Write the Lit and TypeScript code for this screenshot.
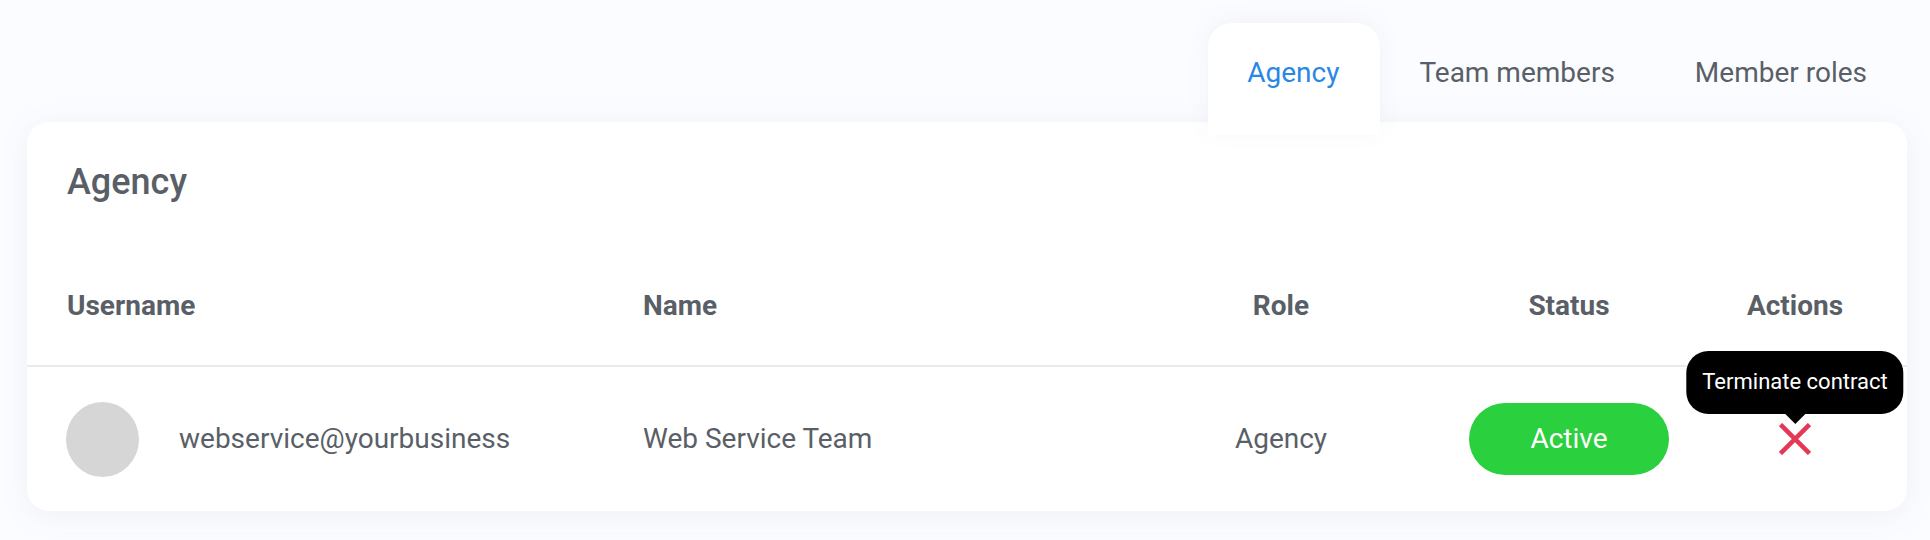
import { LitElement, html, css } from "lit";
import { customElement } from "lit/decorators.js";

@customElement("app-root")
export class AppRoot extends LitElement {
  static styles = css`
    :host {
      display: block;
      width: 100%;
      height: 540px;
      overflow: hidden;
      background: #fbfcff;
      font-family: Roboto, "Liberation Sans", sans-serif;
      color: #5a5f67;
    }
    .page {
      padding: 23px 23px 0 27px;
    }
    .tabs {
      display: flex;
      justify-content: flex-end;
      position: relative;
      z-index: 2;
      height: 99px;
    }
    .tab {
      box-sizing: border-box;
      height: 112px;
      padding: 31px 40px 0;
      font-size: 28px;
      line-height: 38px;
      border-radius: 24px 24px 0 0;
      white-space: nowrap;
    }
    .tab.active {
      background: #fff;
      color: #2a88e4;
      padding-left: 39px;
      padding-right: 41px;
      margin-right: -1px;
      box-shadow: 0 -4px 24px rgba(90, 100, 140, 0.06);
    }
    .card {
      box-sizing: border-box;
      height: 389px;
      background: #fff;
      border-radius: 22px;
      box-shadow: 0 4px 30px rgba(90, 100, 140, 0.08);
    }
    h2 {
      margin: 0;
      padding: 37px 40px 0;
      font-size: 36px;
      line-height: 46px;
      font-weight: 500;
    }
    .row {
      display: grid;
      grid-template-columns: 576px 484px 308px 268px 184px;
      padding: 0 24px 0 40px;
      align-items: center;
    }
    .head {
      margin-top: 48px;
      height: 105px;
      padding-bottom: 7px;
      border-bottom: 2px solid #ebebeb;
      font-size: 28px;
      font-weight: 700;
      box-sizing: content-box;
    }
    .body {
      height: 142px;
      padding-top: 1px;
      font-size: 28px;
    }
    .text {
      padding-bottom: 2px;
    }
    .center {
      text-align: center;
      display: flex;
      justify-content: center;
      align-items: center;
    }
    .user {
      display: flex;
      align-items: center;
      gap: 40px;
    }
    .avatar {
      width: 73px;
      height: 75px;
      border-radius: 50%;
      background: #d6d6d6;
      margin-left: -1px;
    }
    .pill {
      box-sizing: border-box;
      width: 200px;
      height: 72px;
      padding-bottom: 2px;
      border-radius: 36px;
      background: #2ad03d;
      color: #fff;
      display: flex;
      align-items: center;
      justify-content: center;
    }
    .action {
      position: relative;
      height: 32px;
      width: 32px;
    }
    .action svg {
      display: block;
    }
    .tip {
      position: absolute;
      left: 50%;
      bottom: 41px;
      transform: translateX(-50%);
      height: 63px;
      box-sizing: border-box;
      padding: 0 16px 2px;
      display: flex;
      align-items: center;
      background: #000;
      color: #fff;
      border-radius: 22px;
      font-size: 22px;
      white-space: nowrap;
    }
    .tip::after {
      content: "";
      position: absolute;
      left: 50%;
      top: 100%;
      margin-left: -10px;
      border: 10px solid transparent;
      border-top-color: #000;
      border-bottom: 0;
    }
  `;

  render() {
    return html`
      <div class="page">
        <div class="tabs">
          <div class="tab active">Agency</div>
          <div class="tab">Team members</div>
          <div class="tab">Member roles</div>
        </div>
        <div class="card">
          <h2>Agency</h2>
          <div class="row head">
            <div>Username</div>
            <div>Name</div>
            <div class="center">Role</div>
            <div class="center">Status</div>
            <div class="center">Actions</div>
          </div>
          <div class="row body">
            <div class="user"><div class="avatar"></div><span class="text">webservice@yourbusiness</span></div>
            <div class="text">Web Service Team</div>
            <div class="center text">Agency</div>
            <div class="center"><div class="pill">Active</div></div>
            <div class="center">
              <div class="action">
                <div class="tip">Terminate contract</div>
                <svg width="32" height="32" viewBox="0 0 32 32" fill="none" stroke="#e63757" stroke-width="4.5">
                  <path d="M1.5 1.5 L30.5 30.5 M30.5 1.5 L1.5 30.5"></path>
                </svg>
              </div>
            </div>
          </div>
        </div>
      </div>
    `;
  }
}
